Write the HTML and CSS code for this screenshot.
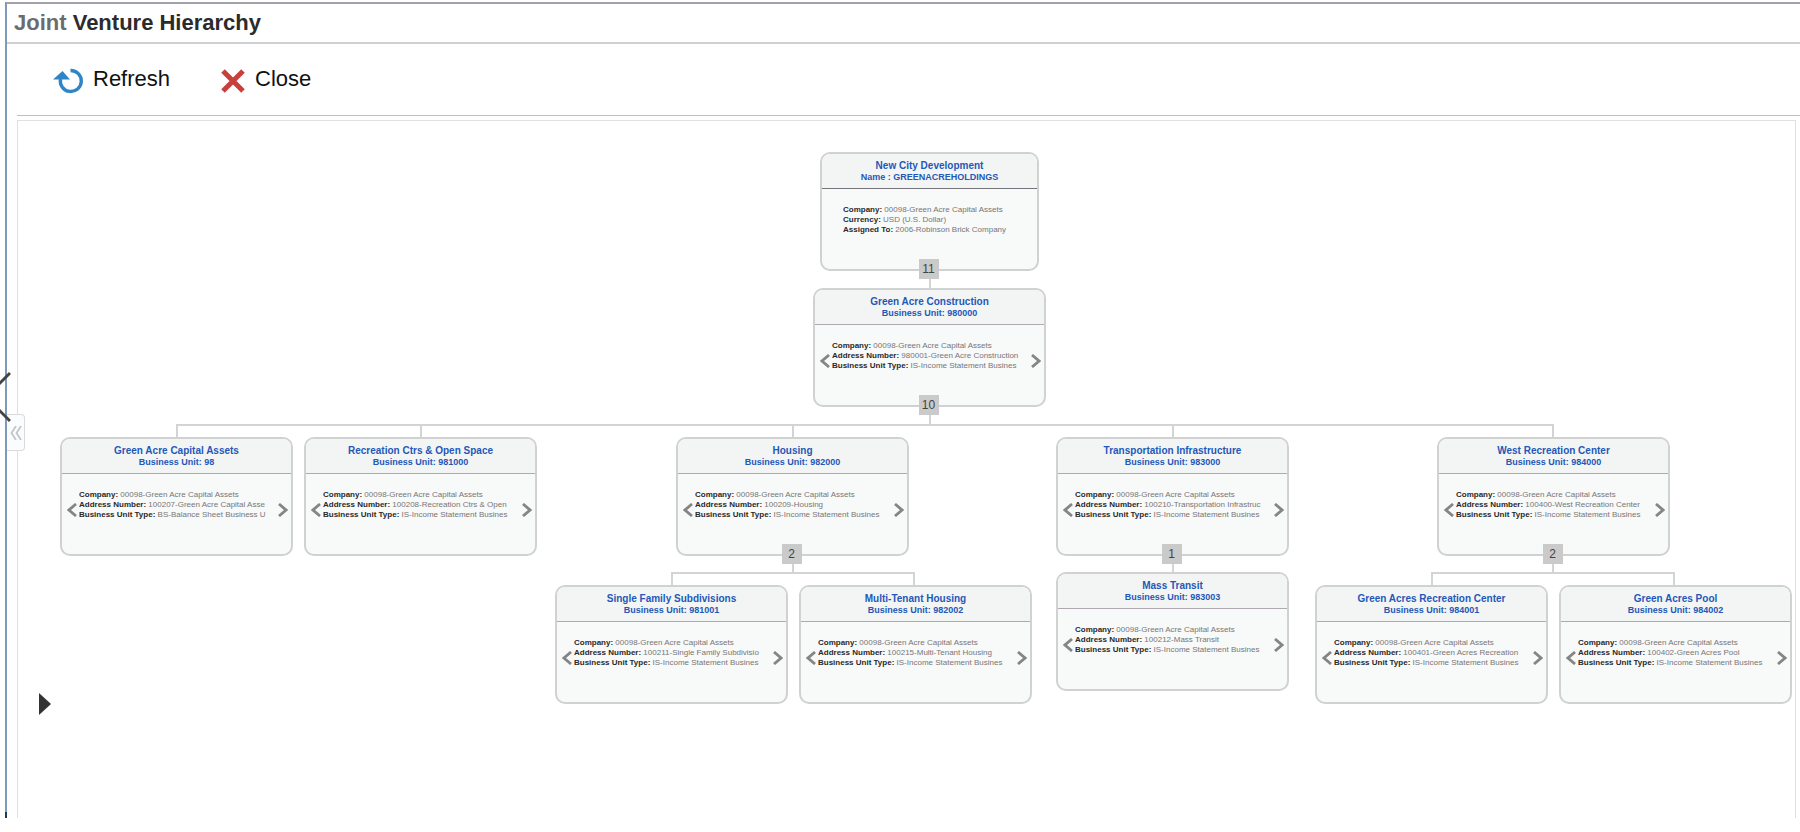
FILE: index.html
```html
<!DOCTYPE html>
<html lang="en">
<head>
<meta charset="utf-8">
<title>Joint Venture Hierarchy</title>
<link rel="stylesheet" href="styles.css">
</head>
<body>
<svg class="defs" aria-hidden="true">
  <symbol id="prev" viewBox="0 0 10 14"><path d="M9 1L2 7l7 6" fill="none" stroke="currentColor" stroke-width="2.800"/></symbol>
  <symbol id="next" viewBox="0 0 10 14"><path d="M1 1l7 6-7 6" fill="none" stroke="currentColor" stroke-width="2.800"/></symbol>
</svg>
<div class="window">
  <header class="titlebar"><h1><span class="faded">Joint</span> Venture Hierarchy</h1></header>
  <div class="toolbar">
    <button class="tool" type="button">
      <svg class="tool-icon refresh" viewBox="0 0 31 26"><path d="M17.500 2.500A10.500 10.500 0 1 1 7.500 11" fill="none" stroke="#2f86c6" stroke-width="3.400"/><path d="M0 11.500L9.500 3l7.500 8.500z" fill="#2f86c6"/></svg>
      Refresh
    </button>
    <button class="tool" type="button">
      <svg class="tool-icon close" viewBox="0 0 24 24"><path d="M2 2l20 20M22 2L2 22" stroke="#c8403e" stroke-width="5"/></svg>
      Close
    </button>
  </div>
  <main class="canvas">
    <svg class="links" width="1776" height="600" viewBox="0 0 1776 600" aria-hidden="true">
      <path d="M912 150v20M912 286v18M159 317v-13h1376v13M403 304v13M775 304v13M1155 304v13M775 436v16M654 465v-13h242v13M1155 436v16M1535 436v16M1414 465v-13h242v13"/>
    </svg>

    <article class="node root at-root">
      <div class="node-head"><h2>New City Development</h2><p>Name : GREENACREHOLDINGS</p></div>
      <div class="node-body"><dl>
        <div><dt>Company:</dt> <dd>00098-Green Acre Capital Assets</dd></div>
        <div><dt>Currency:</dt> <dd>USD (U.S. Dollar)</dd></div>
        <div><dt>Assigned To:</dt> <dd>2006-Robinson Brick Company</dd></div>
      </dl></div>
      <button class="count" type="button">11</button>
    </article>

    <article class="node at-construction">
      <div class="node-head"><h2>Green Acre Construction</h2><p>Business Unit: 980000</p></div>
      <div class="node-body"><button class="step" type="button" aria-label="Previous"><svg><use href="#prev"/></svg></button><dl>
        <div><dt>Company:</dt> <dd>00098-Green Acre Capital Assets</dd></div>
        <div><dt>Address Number:</dt> <dd>980001-Green Acre Construction</dd></div>
        <div><dt>Business Unit Type:</dt> <dd>IS-Income Statement Busines</dd></div>
      </dl><button class="step" type="button" aria-label="Next"><svg><use href="#next"/></svg></button></div>
      <button class="count" type="button">10</button>
    </article>

    <article class="node at-assets">
      <div class="node-head"><h2>Green Acre Capital Assets</h2><p>Business Unit: 98</p></div>
      <div class="node-body"><button class="step" type="button" aria-label="Previous"><svg><use href="#prev"/></svg></button><dl>
        <div><dt>Company:</dt> <dd>00098-Green Acre Capital Assets</dd></div>
        <div><dt>Address Number:</dt> <dd>100207-Green Acre Capital Asse</dd></div>
        <div><dt>Business Unit Type:</dt> <dd>BS-Balance Sheet Business U</dd></div>
      </dl><button class="step" type="button" aria-label="Next"><svg><use href="#next"/></svg></button></div>
    </article>

    <article class="node at-recreation">
      <div class="node-head"><h2>Recreation Ctrs &amp; Open Space</h2><p>Business Unit: 981000</p></div>
      <div class="node-body"><button class="step" type="button" aria-label="Previous"><svg><use href="#prev"/></svg></button><dl>
        <div><dt>Company:</dt> <dd>00098-Green Acre Capital Assets</dd></div>
        <div><dt>Address Number:</dt> <dd>100208-Recreation Ctrs &amp; Open</dd></div>
        <div><dt>Business Unit Type:</dt> <dd>IS-Income Statement Busines</dd></div>
      </dl><button class="step" type="button" aria-label="Next"><svg><use href="#next"/></svg></button></div>
    </article>

    <article class="node at-housing">
      <div class="node-head"><h2>Housing</h2><p>Business Unit: 982000</p></div>
      <div class="node-body"><button class="step" type="button" aria-label="Previous"><svg><use href="#prev"/></svg></button><dl>
        <div><dt>Company:</dt> <dd>00098-Green Acre Capital Assets</dd></div>
        <div><dt>Address Number:</dt> <dd>100209-Housing</dd></div>
        <div><dt>Business Unit Type:</dt> <dd>IS-Income Statement Busines</dd></div>
      </dl><button class="step" type="button" aria-label="Next"><svg><use href="#next"/></svg></button></div>
      <button class="count" type="button">2</button>
    </article>

    <article class="node at-transport">
      <div class="node-head"><h2>Transportation Infrastructure</h2><p>Business Unit: 983000</p></div>
      <div class="node-body"><button class="step" type="button" aria-label="Previous"><svg><use href="#prev"/></svg></button><dl>
        <div><dt>Company:</dt> <dd>00098-Green Acre Capital Assets</dd></div>
        <div><dt>Address Number:</dt> <dd>100210-Transportation Infrastruc</dd></div>
        <div><dt>Business Unit Type:</dt> <dd>IS-Income Statement Busines</dd></div>
      </dl><button class="step" type="button" aria-label="Next"><svg><use href="#next"/></svg></button></div>
      <button class="count" type="button">1</button>
    </article>

    <article class="node at-west">
      <div class="node-head"><h2>West Recreation Center</h2><p>Business Unit: 984000</p></div>
      <div class="node-body"><button class="step" type="button" aria-label="Previous"><svg><use href="#prev"/></svg></button><dl>
        <div><dt>Company:</dt> <dd>00098-Green Acre Capital Assets</dd></div>
        <div><dt>Address Number:</dt> <dd>100400-West Recreation Center</dd></div>
        <div><dt>Business Unit Type:</dt> <dd>IS-Income Statement Busines</dd></div>
      </dl><button class="step" type="button" aria-label="Next"><svg><use href="#next"/></svg></button></div>
      <button class="count" type="button">2</button>
    </article>

    <article class="node at-single">
      <div class="node-head"><h2>Single Family Subdivisions</h2><p>Business Unit: 981001</p></div>
      <div class="node-body"><button class="step" type="button" aria-label="Previous"><svg><use href="#prev"/></svg></button><dl>
        <div><dt>Company:</dt> <dd>00098-Green Acre Capital Assets</dd></div>
        <div><dt>Address Number:</dt> <dd>100211-Single Family Subdivisio</dd></div>
        <div><dt>Business Unit Type:</dt> <dd>IS-Income Statement Busines</dd></div>
      </dl><button class="step" type="button" aria-label="Next"><svg><use href="#next"/></svg></button></div>
    </article>

    <article class="node at-multi">
      <div class="node-head"><h2>Multi-Tenant Housing</h2><p>Business Unit: 982002</p></div>
      <div class="node-body"><button class="step" type="button" aria-label="Previous"><svg><use href="#prev"/></svg></button><dl>
        <div><dt>Company:</dt> <dd>00098-Green Acre Capital Assets</dd></div>
        <div><dt>Address Number:</dt> <dd>100215-Multi-Tenant Housing</dd></div>
        <div><dt>Business Unit Type:</dt> <dd>IS-Income Statement Busines</dd></div>
      </dl><button class="step" type="button" aria-label="Next"><svg><use href="#next"/></svg></button></div>
    </article>

    <article class="node at-transit">
      <div class="node-head"><h2>Mass Transit</h2><p>Business Unit: 983003</p></div>
      <div class="node-body"><button class="step" type="button" aria-label="Previous"><svg><use href="#prev"/></svg></button><dl>
        <div><dt>Company:</dt> <dd>00098-Green Acre Capital Assets</dd></div>
        <div><dt>Address Number:</dt> <dd>100212-Mass Transit</dd></div>
        <div><dt>Business Unit Type:</dt> <dd>IS-Income Statement Busines</dd></div>
      </dl><button class="step" type="button" aria-label="Next"><svg><use href="#next"/></svg></button></div>
    </article>

    <article class="node at-acres">
      <div class="node-head"><h2>Green Acres Recreation Center</h2><p>Business Unit: 984001</p></div>
      <div class="node-body"><button class="step" type="button" aria-label="Previous"><svg><use href="#prev"/></svg></button><dl>
        <div><dt>Company:</dt> <dd>00098-Green Acre Capital Assets</dd></div>
        <div><dt>Address Number:</dt> <dd>100401-Green Acres Recreation</dd></div>
        <div><dt>Business Unit Type:</dt> <dd>IS-Income Statement Busines</dd></div>
      </dl><button class="step" type="button" aria-label="Next"><svg><use href="#next"/></svg></button></div>
    </article>

    <article class="node at-pool">
      <div class="node-head"><h2>Green Acres Pool</h2><p>Business Unit: 984002</p></div>
      <div class="node-body"><button class="step" type="button" aria-label="Previous"><svg><use href="#prev"/></svg></button><dl>
        <div><dt>Company:</dt> <dd>00098-Green Acre Capital Assets</dd></div>
        <div><dt>Address Number:</dt> <dd>100402-Green Acres Pool</dd></div>
        <div><dt>Business Unit Type:</dt> <dd>IS-Income Statement Busines</dd></div>
      </dl><button class="step" type="button" aria-label="Next"><svg><use href="#next"/></svg></button></div>
    </article>

    <button class="expand" type="button" aria-label="Expand panel"><svg width="12" height="22" viewBox="0 0 12 22"><path d="M0 0l12 11L0 22z" fill="#333"/></svg></button>
  </main>
  <button class="collapse" type="button" aria-label="Collapse panel"><svg width="12" height="14" viewBox="0 0 12 14"><path d="M6 0L1.500 7 6 14M11 0L6.500 7 11 14" fill="none" stroke="#c2c6cb" stroke-width="1.800"/></svg></button>
  <svg class="edge-arrow" width="11" height="52" viewBox="0 0 11 52" aria-hidden="true"><path d="M10 2L-14 26l24 24" fill="none" stroke="#444" stroke-width="3"/></svg>
</div>
</body>
</html>
```
FILE: styles.css
```css
* { box-sizing: border-box; }

body {
  margin: 0;
  padding: 2px 0 16px 5px;
  background: #fff;
  color: #222;
  font-family: "Liberation Sans", Arial, sans-serif;
}

h1, h2, p, dl, dd { margin: 0; }

button {
  margin: 0;
  padding: 0;
  border: 0;
  background: none;
  color: inherit;
  font: inherit;
}

.defs { display: none; }

.window {
  position: relative;
  display: flex;
  flex-direction: column;
  min-height: calc(100vh - 16px);
  border-top: 2px solid #a2a2aa;
  border-left: 2px solid #7f9ab8;
}

/* dark corner at the foot of the left border */
.window::after {
  content: "";
  position: absolute;
  bottom: 0;
  left: -2px;
  width: 2px;
  height: 6px;
  background: #1d3c5c;
}

.titlebar {
  padding: 6px 7px;
  border-bottom: 2px solid #cdd1cf;
}

h1 {
  color: #2b2b2b;
  font-size: 22px;
  line-height: 26px;
}

.faded { color: #6c6c6c; }

.toolbar {
  display: flex;
  align-items: center;
  gap: 50px;
  height: 72px;
  margin-left: 10px;
  padding: 0 36px 2px;
  border-bottom: 1px solid #c2bcc4;
}

.tool {
  display: flex;
  align-items: center;
  gap: 9px;
  color: #111;
  font-size: 22px;
  line-height: 26px;
}

.tool-icon { flex: none; margin-top: 4px; }
.refresh { width: 31px; height: 26px; }
.close { width: 26px; height: 24px; }

.canvas {
  position: relative;
  flex: 1;
  margin: 4px 4px 0 10px;
  border: 1px solid #dfe1e0;
  border-bottom: 0;
}

.links {
  position: absolute;
  top: 0;
  left: 0;
  fill: none;
  stroke: #d2d5d4;
  stroke-width: 2;
}

.node {
  position: absolute;
  width: 233px;
  height: 119px;
  border: 2px solid #cfd2d1;
  border-radius: 10px;
  background: #f8f9f9;
}

.node.root { width: 219px; }

.node-head {
  padding: 6px 0 5px;
  border-bottom: 1px solid #b0a9b1;
  border-radius: 8px 8px 0 0;
  background: #f3f5f5;
  color: #2458b8;
  font-weight: bold;
  text-align: center;
}

.root .node-head { border-bottom-color: #77737b; }

.node-head h2 { font-size: 10px; line-height: 12px; }
.node-head p { font-size: 9px; line-height: 11px; }

.node-body {
  display: flex;
  align-items: flex-start;
  padding: 16px 3px 0 5px;
}

.root .node-body { padding-left: 21px; }

.node-body dl {
  flex: 1;
  min-width: 0;
  margin: 0 4px 0 2px;
  overflow: hidden;
  color: #777;
  font-size: 8px;
  line-height: 10px;
  white-space: nowrap;
}

.root .node-body dl { margin: 0; }

dt, dd { display: inline; }

dt {
  color: #2a2a2a;
  font-weight: bold;
}

.step {
  display: flex;
  align-items: center;
  height: 40px;
  color: #858585;
}

.step svg { width: 10px; height: 14px; }

.count {
  position: absolute;
  bottom: -10px;
  left: calc(50% - 11px);
  width: 20px;
  height: 20px;
  background: #cacaca;
  color: #444;
  font-size: 12px;
  line-height: 20px;
  text-align: center;
}

.at-root { left: 802px; top: 31px; }
.at-construction { left: 795px; top: 167px; }
.at-assets { left: 42px; top: 316px; }
.at-recreation { left: 286px; top: 316px; }
.at-housing { left: 658px; top: 316px; }
.at-transport { left: 1038px; top: 316px; }
.at-west { left: 1419px; top: 316px; }
.at-single { left: 537px; top: 464px; }
.at-multi { left: 781px; top: 464px; }
.at-transit { left: 1038px; top: 451px; }
.at-acres { left: 1297px; top: 464px; }
.at-pool { left: 1541px; top: 464px; }

.expand {
  position: absolute;
  top: 572px;
  left: 21px;
  display: flex;
}

.collapse {
  position: absolute;
  top: 410px;
  left: 0;
  display: flex;
  align-items: center;
  justify-content: center;
  width: 18px;
  height: 37px;
  border: 1px solid #d8dbdc;
  border-left: 0;
  border-radius: 0 4px 4px 0;
  background: #fbfcfd;
}

.edge-arrow {
  position: absolute;
  top: 367px;
  left: -7px;
}
```
